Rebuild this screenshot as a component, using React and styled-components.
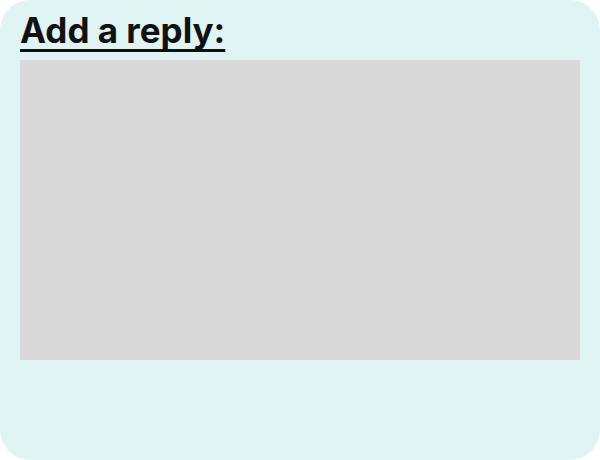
import React from 'react'
import styled, { createGlobalStyle } from 'styled-components'

const GlobalStyle = createGlobalStyle`
  html, body {
    margin: 0;
    padding: 0;
    background: #ffffff;
  }
  body {
    font-family: Inter, "Noto Sans", sans-serif;
  }
`

const Card = styled.div`
  width: 600px;
  height: 460px;
  box-sizing: border-box;
  padding: 0 20px;
  background: #e1f4f4;
  border-radius: 30px;
  display: flex;
  flex-direction: column;
`

const Title = styled.h2`
  margin: 0;
  font-size: 35px;
  line-height: 60px;
  font-weight: 700;
  color: #111111;
  text-decoration: underline;
  text-decoration-thickness: 3px;
  text-underline-offset: 6px;
  text-decoration-skip-ink: none;
`

const ReplyBox = styled.textarea`
  width: 560px;
  height: 300px;
  box-sizing: border-box;
  border: none;
  outline: none;
  resize: none;
  background: #d9d9d9;
  padding: 10px;
  font-family: Inter, "Noto Sans", sans-serif;
  font-size: 16px;
`

export default function App() {
  return (
    <>
      <GlobalStyle />
      <Card>
        <Title>Add a reply:</Title>
        <ReplyBox />
      </Card>
    </>
  )
}
